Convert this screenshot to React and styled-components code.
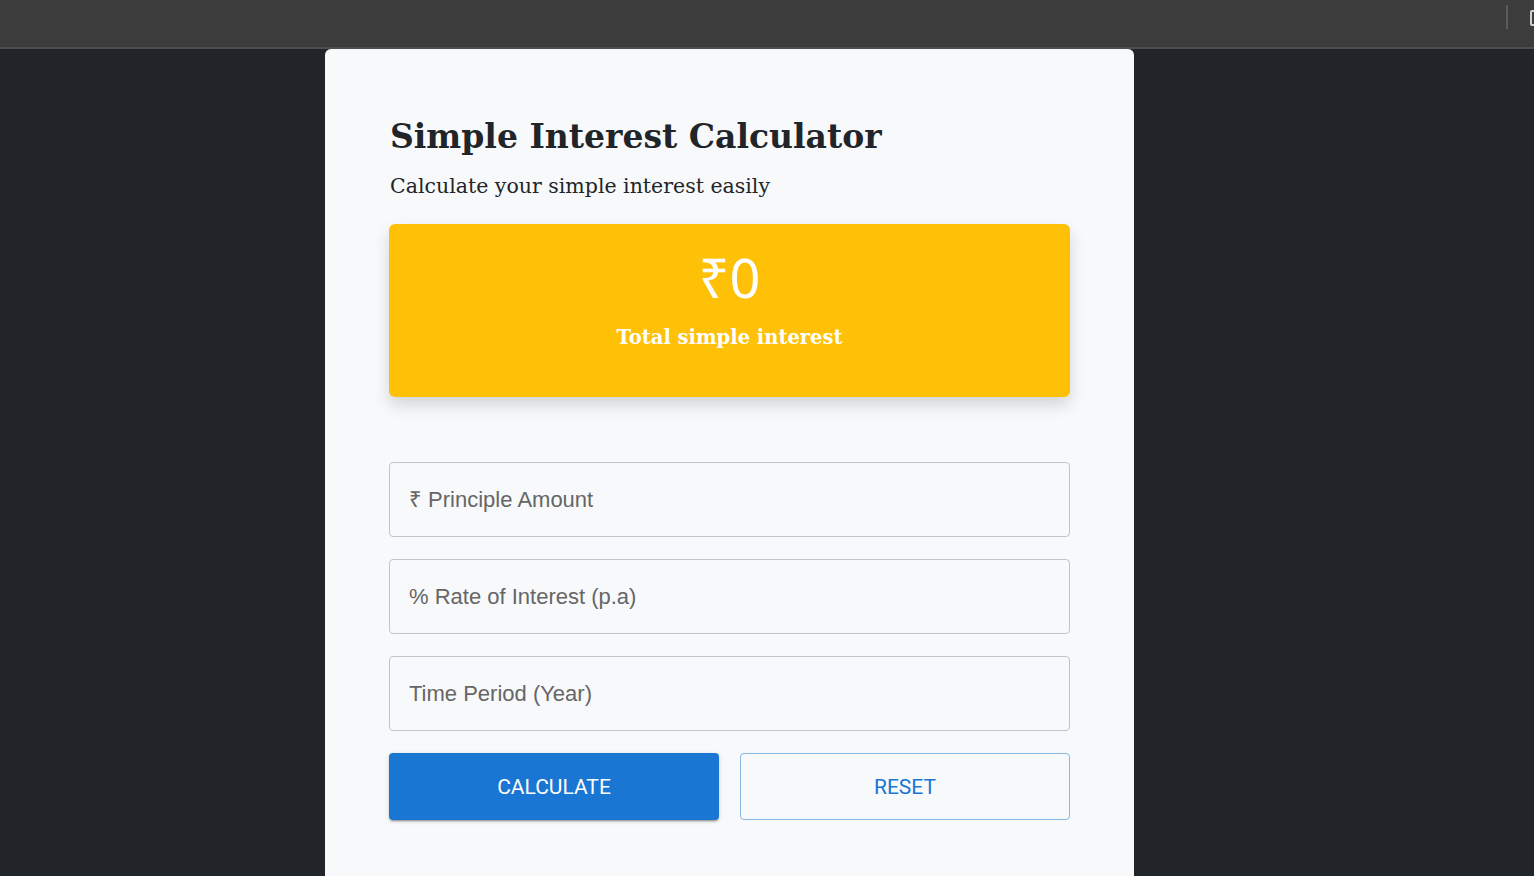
import React, { useState } from "react";
import styled, { createGlobalStyle } from "styled-components";

const GlobalStyle = createGlobalStyle`
    * { box-sizing: border-box; }
    body {
        margin: 0;
        background: #212529;
        font-family: "Liberation Sans", Arial, sans-serif;
    }
`;

export default function App() {
    const [principle, setPrinciple] = useState("");
    const [rate, setRate] = useState("");
    const [time, setTime] = useState("");
    const [interest, setInterest] = useState(0);

    function calculate() {
        setInterest((Number(principle) * Number(rate) * Number(time)) / 100);
    }

    function reset() {
        setPrinciple("");
        setRate("");
        setTime("");
        setInterest(0);
    }

    return (
        <>
            <GlobalStyle />
            <TopBar>
                <Separator />
                <TabIcon />
            </TopBar>
            <Page>
                <Card>
                    <Title>Simple Interest Calculator</Title>
                    <Subtitle>Calculate your simple interest easily</Subtitle>
                    <ResultBox>
                        <Amount>₹{interest}</Amount>
                        <ResultLabel>Total simple interest</ResultLabel>
                    </ResultBox>
                    <Form>
                        <Field placeholder="₹ Principle Amount" value={principle} onChange={(e) => setPrinciple(e.target.value)} />
                        <Field placeholder="% Rate of Interest (p.a)" value={rate} onChange={(e) => setRate(e.target.value)} />
                        <Field placeholder="Time Period (Year)" value={time} onChange={(e) => setTime(e.target.value)} />
                        <Buttons>
                            <ButtonCalculate onClick={calculate}>CALCULATE</ButtonCalculate>
                            <ButtonReset onClick={reset}>RESET</ButtonReset>
                        </Buttons>
                    </Form>
                </Card>
            </Page>
        </>
    );
}

const TopBar = styled.div`
    height: 49px;
    background: #3c3c3c;
    border-bottom: 2px solid #4e4e4e;
    display: flex;
    justify-content: flex-end;
    align-items: flex-start;
    padding-top: 5px;
    gap: 22px;
    overflow: hidden;
`;

const Separator = styled.div`
    width: 2px;
    height: 24px;
    background: #5c5c5c;
`;

const TabIcon = styled.div`
    width: 12px;
    height: 16px;
    margin-top: 5px;
    margin-right: -8px;
    border: 2px solid #cfcfcf;
    border-radius: 2px;
`;

const Page = styled.div`
    padding-left: 325px;
`;

const Card = styled.div`
    width: 809px;
    min-height: 830px;
    background: #f8f9fa;
    border-radius: 6px 6px 0 0;
    padding: 65px 64px 60px 64px;
`;

const Title = styled.h1`
    margin: 0;
    font-family: "DejaVu Serif", "Liberation Serif", serif;
    font-weight: 700;
    font-size: 33px;
    line-height: 46px;
    color: #212529;
    padding-left: 1px;
`;

const Subtitle = styled.p`
    margin: 11px 0 0 0;
    font-family: "DejaVu Serif", "Liberation Serif", serif;
    font-size: 20.5px;
    line-height: 30px;
    color: #212529;
    padding-left: 1px;
`;

const ResultBox = styled.div`
    margin-top: 23px;
    height: 173px;
    background: #ffc107;
    border-radius: 6px;
    box-shadow: 0 8px 16px rgba(0, 0, 0, 0.15);
    display: flex;
    flex-direction: column;
    align-items: center;
    padding-top: 19px;
    color: #ffffff;
`;

const Amount = styled.div`
    font-family: "Noto Sans", "DejaVu Sans", sans-serif;
    font-size: 54px;
    line-height: 68px;
`;

const ResultLabel = styled.div`
    margin-top: 15px;
    font-family: "DejaVu Serif", "Liberation Serif", serif;
    font-weight: 700;
    font-size: 19.5px;
`;

const Form = styled.div`
    margin-top: 65px;
    display: flex;
    flex-direction: column;
    gap: 22px;
`;

const Field = styled.input`
    width: 100%;
    height: 75px;
    padding: 0 19px;
    background: #f8f9fa;
    border: 1px solid #c4c4c4;
    border-radius: 4px;
    font-family: "Liberation Sans", Arial, sans-serif;
    font-size: 22px;
    color: #212529;
    outline: none;

    &::placeholder {
        color: #666666;
    }
`;

const Buttons = styled.div`
    display: flex;
    gap: 21px;
`;

const ButtonCalculate = styled.button`
    width: 330px;
    height: 67px;
    background: #1976d2;
    color: #ffffff;
    border: none;
    border-radius: 4px;
    font-family: Roboto, "Liberation Sans", sans-serif;
    font-size: 21px;
    cursor: pointer;
    box-shadow: 0 3px 1px -2px rgba(0, 0, 0, 0.2), 0 2px 2px 0 rgba(0, 0, 0, 0.14), 0 1px 5px 0 rgba(0, 0, 0, 0.12);
`;

const ButtonReset = styled.button`
    width: 330px;
    height: 67px;
    background: transparent;
    color: #1976d2;
    border: 1px solid rgba(25, 118, 210, 0.5);
    border-radius: 4px;
    font-family: Roboto, "Liberation Sans", sans-serif;
    font-size: 21px;
    cursor: pointer;
`;
